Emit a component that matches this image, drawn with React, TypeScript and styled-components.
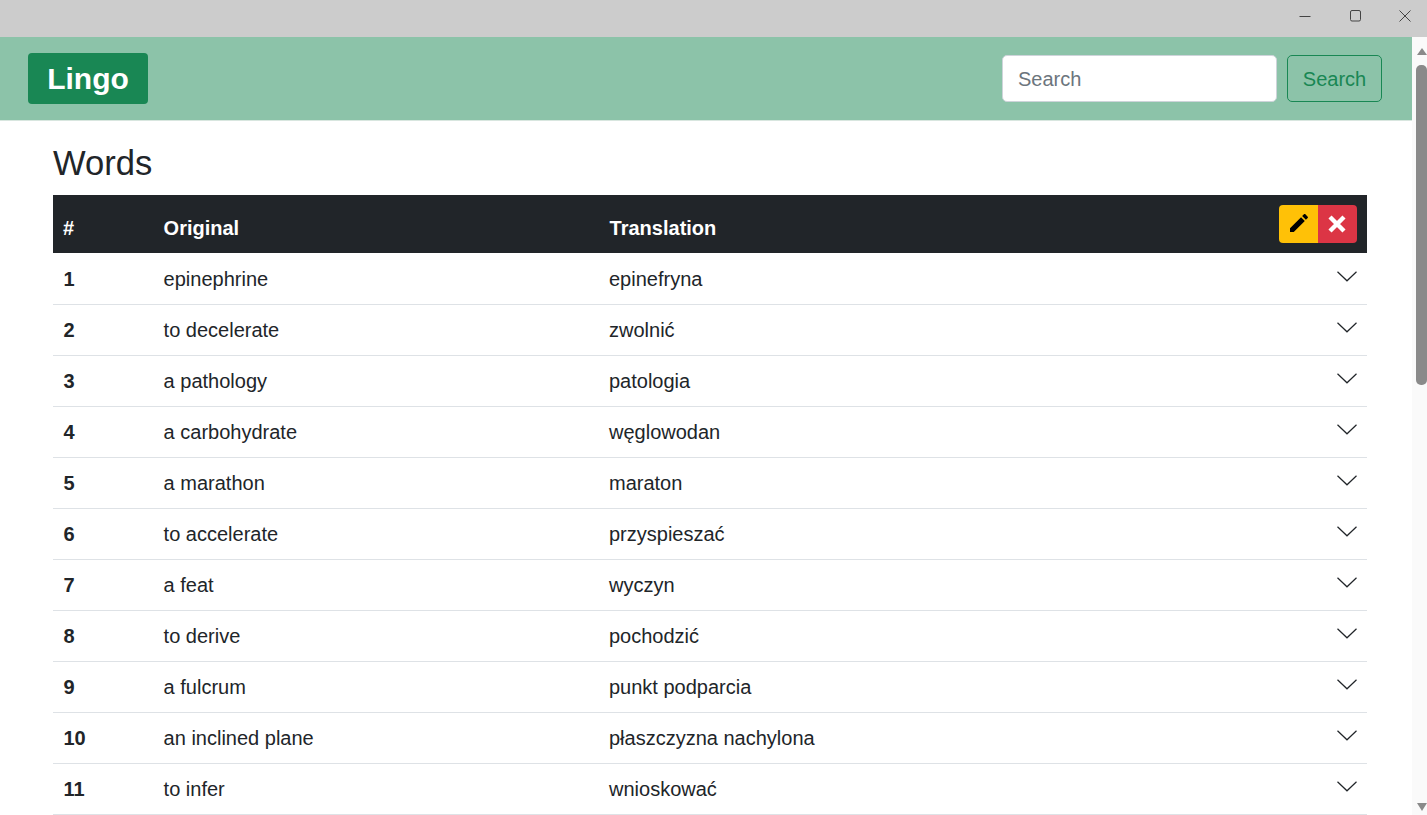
import React from "react";
import styled, { createGlobalStyle } from "styled-components";

const Global = createGlobalStyle`
  html, body { margin: 0; height: 100%; overflow: hidden; background: #fff; }
  body { font-family: "Liberation Sans", Arial, sans-serif; color: #212529; }
  #root { height: 100%; }
`;

const Shell = styled.div`
  display: flex;
  flex-direction: column;
  height: 815px;
  overflow: hidden;
`;

const TitleBar = styled.div`
  flex: 0 0 37px;
  height: 37px;
  background: #cccccc;
  display: flex;
  justify-content: flex-end;
  align-items: flex-start;
  gap: 6px;
`;

const WinButton = styled.div`
  width: 44px;
  height: 32px;
  display: flex;
  align-items: center;
  justify-content: center;
`;

const Body = styled.div`
  flex: 1;
  display: flex;
  min-height: 0;
`;

const Page = styled.div`
  flex: 1;
  min-width: 0;
  overflow: hidden;
`;

const NavBar = styled.nav`
  box-sizing: content-box;
  height: 83px;
  background: #8cc3a9;
  border-bottom: 1px solid #d8e6df;
  display: flex;
  align-items: center;
  justify-content: space-between;
  padding: 0 30px 0 28px;
`;

const Brand = styled.a`
  display: block;
  width: 120px;
  height: 51px;
  line-height: 51px;
  text-align: center;
  background: #198754;
  color: #fff;
  border-radius: 4px;
  font-size: 30px;
  font-weight: 700;
`;

const SearchForm = styled.form`
  display: flex;
  gap: 10px;
  margin: 0;
`;

const SearchInput = styled.input`
  box-sizing: border-box;
  width: 275px;
  height: 47px;
  padding: 2px 15px 0;
  border: 1px solid #ced4da;
  border-radius: 5px;
  background: #fff;
  font: 400 20px "Liberation Sans", Arial, sans-serif;
  color: #212529;
  outline: none;
  &::placeholder { color: #6c757d; opacity: 1; }
`;

const SearchButton = styled.button`
  box-sizing: border-box;
  width: 95px;
  height: 47px;
  padding: 2px 0 0;
  border: 1px solid #198754;
  border-radius: 5px;
  background: transparent;
  color: #198754;
  font: 400 20px "Liberation Sans", Arial, sans-serif;
`;

const Content = styled.main`
  padding: 0 45px 0 53px;
`;

const Heading = styled.h1`
  margin: 0;
  height: 74px;
  line-height: 84px;
  font-size: 34.6px;
  font-weight: 400;
  color: #212529;
`;

const Table = styled.table`
  width: 1314px;
  border-collapse: collapse;
  table-layout: fixed;
  font-size: 20px;
`;

const HeadRow = styled.tr`
  background: #212529;
  color: #fff;
  height: 58px;
`;

const HeadCell = styled.th<{ $w?: number; $pad?: number }>`
  box-sizing: border-box;
  width: ${(p) => (p.$w ? `${p.$w}px` : "auto")};
  padding: 8px 0 0 ${(p) => p.$pad ?? 10}px;
  text-align: left;
  font-weight: 700;
  vertical-align: middle;
`;

const ActionCell = styled.th`
  box-sizing: border-box;
  width: 140px;
  padding: 0 10px 0 0;
  vertical-align: middle;
`;

const ActionGroup = styled.div`
  display: flex;
  justify-content: flex-end;
`;

const ActionButton = styled.button<{ $bg: string; $side: "l" | "r" }>`
  width: 39px;
  height: 38px;
  padding: 0;
  border: 0;
  background: ${(p) => p.$bg};
  border-radius: ${(p) => (p.$side === "l" ? "4px 0 0 4px" : "0 4px 4px 0")};
  display: flex;
  align-items: center;
  justify-content: center;
`;

const PencilIcon = styled.svg`
  margin-top: -3px;
`;

const CrossIcon = styled.svg`
  margin-left: -2px;
`;

const Row = styled.tr`
  height: 51px;
  border-bottom: 1px solid #dee2e6;
  &:first-child td:not(:last-child) { padding-top: 3px; }
`;

const NumCell = styled.td`
  padding: 1px 0 0 10.5px;
  font-weight: 700;
`;

const TextCell = styled.td<{ $pad?: number }>`
  padding: 1px 0 0 ${(p) => p.$pad ?? 10}px;
`;

const ChevronCell = styled.td`
  padding: 0 10px 4px 0;
  text-align: right;
  line-height: 0;
`;

const ScrollBar = styled.div`
  flex: 0 0 15px;
  box-sizing: border-box;
  width: 15px;
  background: #fafafa;
  display: flex;
  flex-direction: column;
  align-items: flex-end;
`;

const ArrowUp = styled.div`
  margin-top: 11px;
  width: 0;
  height: 0;
  border-left: 5.5px solid transparent;
  border-right: 5.5px solid transparent;
  border-bottom: 7px solid #8a8a8a;
`;

const Thumb = styled.div`
  margin-top: 10px;
  width: 11px;
  height: 320px;
  background: #8a8a8a;
  border-radius: 5px;
`;

const ArrowDown = styled.div`
  margin-top: auto;
  margin-bottom: 4px;
  width: 0;
  height: 0;
  border-left: 5.5px solid transparent;
  border-right: 5.5px solid transparent;
  border-top: 8px solid #8a8a8a;
`;

const words: [string, string][] = [
  ["epinephrine", "epinefryna"],
  ["to decelerate", "zwolnić"],
  ["a pathology", "patologia"],
  ["a carbohydrate", "węglowodan"],
  ["a marathon", "maraton"],
  ["to accelerate", "przyspieszać"],
  ["a feat", "wyczyn"],
  ["to derive", "pochodzić"],
  ["a fulcrum", "punkt podparcia"],
  ["an inclined plane", "płaszczyzna nachylona"],
  ["to infer", "wnioskować"],
];

const Chevron = () => (
  <svg width="20" height="11" viewBox="0 0 20 11" fill="none" stroke="#212529" strokeWidth="1.2">
    <path d="M0.5 0.8 L10 9.8 L19.5 0.8" />
  </svg>
);

export default function App() {
  return (
    <Shell>
      <Global />
      <TitleBar>
        <WinButton>
          <svg width="12" height="12" viewBox="0 0 12 12" stroke="#444" fill="none"><path d="M0.5 6.5h11" /></svg>
        </WinButton>
        <WinButton>
          <svg width="12" height="12" viewBox="0 0 12 12" stroke="#444" fill="none"><rect x="1.5" y="0.5" width="10" height="10.5" rx="1.5" /></svg>
        </WinButton>
        <WinButton>
          <svg width="12" height="12" viewBox="0 0 12 12" stroke="#444" fill="none"><path d="M0.5 0.5l11 11M11.5 0.5l-11 11" /></svg>
        </WinButton>
      </TitleBar>
      <Body>
        <Page>
          <NavBar>
            <Brand>Lingo</Brand>
            <SearchForm onSubmit={(e) => e.preventDefault()}>
              <SearchInput placeholder="Search" />
              <SearchButton type="button">Search</SearchButton>
            </SearchForm>
          </NavBar>
          <Content>
            <Heading>Words</Heading>
            <Table>
              <thead>
                <HeadRow>
                  <HeadCell $w={101}>#</HeadCell>
                  <HeadCell $w={445} $pad={9.6}>Original</HeadCell>
                  <HeadCell $pad={10.6}>Translation</HeadCell>
                  <ActionCell>
                    <ActionGroup>
                      <ActionButton $bg="#ffc107" $side="l" aria-label="edit">
                        <PencilIcon width="24" height="24" viewBox="0 0 24 24" fill="#000">
                          <path d="M3 17.25V21h3.75L17.81 9.94l-3.75-3.75L3 17.25zM20.71 7.04c.39-.39.39-1.02 0-1.41l-2.34-2.34c-.39-.39-1.02-.39-1.41 0l-1.83 1.83 3.75 3.75 1.83-1.83z" />
                        </PencilIcon>
                      </ActionButton>
                      <ActionButton $bg="#dc3545" $side="r" aria-label="delete">
                        <CrossIcon width="20" height="20" viewBox="0 0 20 20" fill="none" stroke="#fff" strokeWidth="4.4">
                          <path d="M3 3l14 14M17 3l-14 14" />
                        </CrossIcon>
                      </ActionButton>
                    </ActionGroup>
                  </ActionCell>
                </HeadRow>
              </thead>
              <tbody>
                {words.map(([o, t], i) => (
                  <Row key={o}>
                    <NumCell>{i + 1}</NumCell>
                    <TextCell $pad={9.6}>{o}</TextCell>
                    <TextCell>{t}</TextCell>
                    <ChevronCell><Chevron /></ChevronCell>
                  </Row>
                ))}
              </tbody>
            </Table>
          </Content>
        </Page>
        <ScrollBar>
          <ArrowUp />
          <Thumb />
          <ArrowDown />
        </ScrollBar>
      </Body>
    </Shell>
  );
}
